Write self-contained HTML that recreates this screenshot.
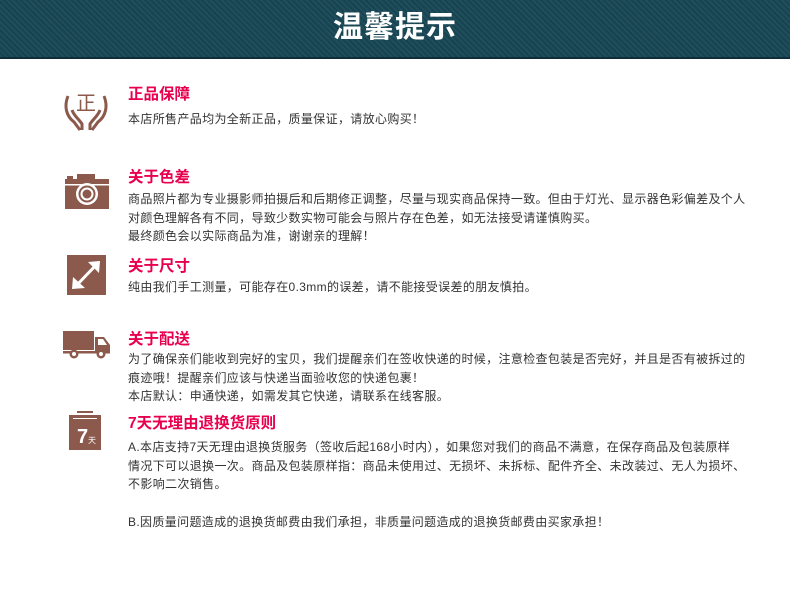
<!DOCTYPE html>
<html><head><meta charset="utf-8"><style>
*{margin:0;padding:0}
body{width:790px;height:594px;background:#fff;position:relative;overflow:hidden;font-family:"Liberation Sans","Noto Sans CJK SC",sans-serif}
.hd{position:absolute;left:0;top:0;width:790px;height:57px;background:repeating-linear-gradient(45deg,#1f4e5e 0 2px,#19434f 2px 4px);border-bottom:2px solid #0f2e3a}
.hd div{position:absolute;left:0;right:0;top:10px;text-align:center;color:#fff;font-size:30px;font-weight:bold;line-height:36px;letter-spacing:1px}
.t{position:absolute;left:128px;color:#e8004e;font-size:15.5px;font-weight:bold;line-height:18px;white-space:nowrap}
.b{position:absolute;left:128px;color:#333;font-size:12px;line-height:18.7px;white-space:nowrap;letter-spacing:0.35px}
svg{position:absolute}
</style></head><body>
<div class="hd"><div>温馨提示</div></div>

<svg style="left:62px;top:88px" width="48" height="46" viewBox="0 0 48 46">
<text x="24" y="22" text-anchor="middle" font-size="20" fill="#8b5a4c" font-family="Noto Sans CJK SC,sans-serif">正</text>
<path d="M6 8 C2 18 4 28 12 34 L18 42 M10 22 C12 28 16 30 20 36 L20 42" stroke="#8b5a4c" stroke-width="3" fill="none"/>
<path d="M42 8 C46 18 44 28 36 34 L30 42 M38 22 C36 28 32 30 28 36 L28 42" stroke="#8b5a4c" stroke-width="3" fill="none"/>
</svg>

<svg style="left:65px;top:173px" width="44" height="36" viewBox="0 0 44 36">
<rect x="0" y="6" width="44" height="30" fill="#8b5a4c"/>
<rect x="12" y="1" width="18" height="6" fill="#8b5a4c"/>
<rect x="2" y="3" width="6" height="3" fill="#8b5a4c"/>
<circle cx="22" cy="21" r="11" fill="#fff"/><circle cx="22" cy="21" r="8.5" fill="#8b5a4c"/><circle cx="22" cy="21" r="6.5" fill="#fff"/><circle cx="22" cy="21" r="4.5" fill="#8b5a4c"/>
<rect x="0" y="11" width="44" height="1.5" fill="#fff"/>
</svg>

<svg style="left:67px;top:255px" width="39" height="40" viewBox="0 0 39 40">
<rect width="39" height="40" fill="#8b5a4c"/>
<path d="M8 32 L31 8" stroke="#fff" stroke-width="3"/>
<path d="M21 7 L33 6 L32 18 Z M6 22 L5 34 L18 33 Z" fill="#fff"/>
</svg>

<svg style="left:63px;top:330px" width="48" height="30" viewBox="0 0 48 30">
<rect x="0" y="1" width="31" height="19" fill="#8b5a4c"/>
<path d="M32 7 L41 7 L47 15 L47 23 L32 23 Z" fill="#8b5a4c"/>
<path d="M35 9 L40 9 L44 15 L35 15Z" fill="#fff"/>
<rect x="0" y="21" width="47" height="2.5" fill="#8b5a4c"/>
<circle cx="11" cy="24" r="4.5" fill="#8b5a4c"/><circle cx="11" cy="24" r="2" fill="#fff"/>
<circle cx="38" cy="24" r="4.5" fill="#8b5a4c"/><circle cx="38" cy="24" r="2" fill="#fff"/>
</svg>

<svg style="left:69px;top:410px" width="32" height="40" viewBox="0 0 32 40">
<rect x="0" y="5" width="32" height="35" fill="#8b5a4c"/>
<rect x="8" y="1" width="16" height="2" fill="#8b5a4c"/>
<rect x="4" y="8" width="24" height="1" fill="#fff"/>
<text x="8" y="33" font-size="20" font-weight="bold" fill="#fff" font-family="Liberation Sans">7</text>
<text x="19" y="33" font-size="8" fill="#fff" font-family="Noto Sans CJK SC,sans-serif">天</text>
</svg>

<div class="t" style="top:86px">正品保障</div>
<div class="b" style="top:110px">本店所售产品均为全新正品，质量保证，请放心购买！</div>

<div class="t" style="top:169px">关于色差</div>
<div class="b" style="top:190px">商品照片都为专业摄影师拍摄后和后期修正调整，尽量与现实商品保持一致。但由于灯光、显示器色彩偏差及个人<br>对颜色理解各有不同，导致少数实物可能会与照片存在色差，如无法接受请谨慎购买。<br>最终颜色会以实际商品为准，谢谢亲的理解！</div>

<div class="t" style="top:258px">关于尺寸</div>
<div class="b" style="top:278px">纯由我们手工测量，可能存在0.3mm的误差，请不能接受误差的朋友慎拍。</div>

<div class="t" style="top:331px">关于配送</div>
<div class="b" style="top:350px">为了确保亲们能收到完好的宝贝，我们提醒亲们在签收快递的时候，注意检查包装是否完好，并且是否有被拆过的<br>痕迹哦！提醒亲们应该与快递当面验收您的快递包裹！<br>本店默认：申通快递，如需发其它快递，请联系在线客服。</div>

<div class="t" style="top:415px">7天无理由退换货原则</div>
<div class="b" style="top:438px">A.本店支持7天无理由退换货服务（签收后起168小时内），如果您对我们的商品不满意，在保存商品及包装原样<br>情况下可以退换一次。商品及包装原样指：商品未使用过、无损坏、未拆标、配件齐全、未改装过、无人为损坏、<br>不影响二次销售。<br><br>B.因质量问题造成的退换货邮费由我们承担，非质量问题造成的退换货邮费由买家承担！</div>
</body></html>
